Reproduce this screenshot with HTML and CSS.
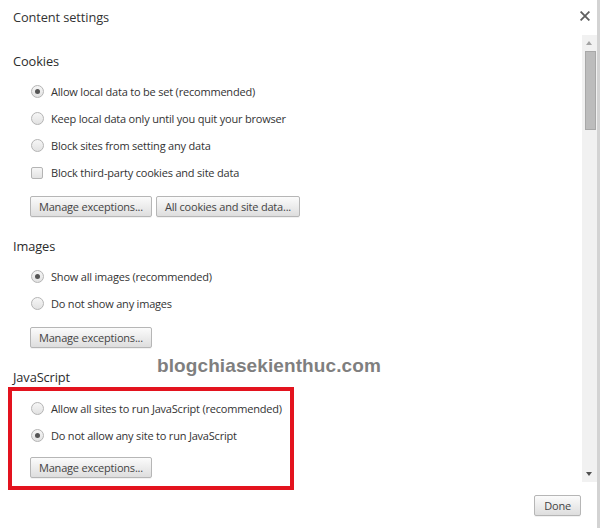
FILE: index.html
```html
<!DOCTYPE html>
<html>
<head>
<meta charset="utf-8">
<link rel="stylesheet" href="styles.css">
</head>
<body>
<div class="dialog">
  <div class="header">
    <div class="title">Content settings</div>
    <div class="close"><svg width="10" height="10" viewBox="0 0 10 10"><path d="M1.2 1.2L8.8 8.8M8.8 1.2L1.2 8.8" stroke="#5f5f5f" stroke-width="1.8" stroke-linecap="square"/></svg></div>
  </div>
  <div class="main">
    <div class="content">
      <div class="section">
        <div class="heading">Cookies</div>
        <div class="row"><span class="radio checked"></span><span>Allow local data to be set (recommended)</span></div>
        <div class="row"><span class="radio"></span><span>Keep local data only until you quit your browser</span></div>
        <div class="row"><span class="radio"></span><span>Block sites from setting any data</span></div>
        <div class="row"><span class="check"></span><span>Block third-party cookies and site data</span></div>
        <div class="buttons"><span class="btn">Manage exceptions...</span><span class="btn">All cookies and site data...</span></div>
      </div>
      <div class="section">
        <div class="heading">Images</div>
        <div class="row"><span class="radio checked"></span><span>Show all images (recommended)</span></div>
        <div class="row"><span class="radio"></span><span>Do not show any images</span></div>
        <div class="buttons"><span class="btn">Manage exceptions...</span></div>
      </div>
      <div class="section">
        <div class="heading flush">JavaScript</div>
        <div class="highlight">
          <div class="row"><span class="radio"></span><span>Allow all sites to run JavaScript (recommended)</span></div>
          <div class="row"><span class="radio checked"></span><span>Do not allow any site to run JavaScript</span></div>
          <div class="buttons"><span class="btn">Manage exceptions...</span></div>
        </div>
      </div>
    </div>
    <div class="scrollbar">
      <div class="arrow up"></div>
      <div class="thumb"></div>
      <div class="spacer"></div>
      <div class="arrow down"></div>
    </div>
  </div>
  <div class="footer"><span class="btn done">Done</span></div>
  <div class="watermark">blogchiasekienthuc.com</div>
</div>
</body>
</html>
```
FILE: styles.css
```css
html, body {
  margin: 0;
  padding: 0;
  background: #fff;
}
.dialog {
  position: relative;
  width: 597px;
  height: 528px;
  border-right: 3px solid #d3d3d3;
  display: flex;
  flex-direction: column;
  font-family: "Open Sans", "Noto Sans", sans-serif;
  color: #303030;
  overflow: hidden;
}
.header {
  height: 35px;
  display: flex;
  justify-content: space-between;
  align-items: flex-start;
}
.title {
  font-size: 12.8px;
  letter-spacing: -0.1px;
  margin: 7px 0 0 13px;
  color: #333;
  line-height: 20px;
}
.close {
  margin: 4px 7px 0 0;
}
.main {
  height: 447px;
  display: flex;
}
.content {
  flex: 1;
  padding: 16px 0 0 13px;
}
.section {
  margin-bottom: 19px;
}
.heading {
  font-size: 12.8px;
  letter-spacing: -0.1px;
  line-height: 20px;
  height: 20px;
  color: #2b2b2b;
  margin-bottom: 7px;
}
.heading.flush {
  margin-bottom: 0;
}
.row {
  height: 27px;
  display: flex;
  align-items: center;
  padding-left: 18px;
  font-size: 11px;
  letter-spacing: -0.2px;
  color: #333;
  white-space: nowrap;
}
.radio {
  width: 11px;
  height: 11px;
  border: 1px solid #b4b4b4;
  border-radius: 50%;
  background: linear-gradient(#f6f6f6, #e2e2e2);
  margin-right: 7px;
  position: relative;
  box-sizing: content-box;
  flex: none;
}
.radio.checked::after {
  content: "";
  position: absolute;
  left: 3px;
  top: 3px;
  width: 5px;
  height: 5px;
  border-radius: 50%;
  background: #555;
}
.check {
  width: 10px;
  height: 10px;
  border: 1px solid #b4b4b4;
  border-radius: 2px;
  background: linear-gradient(#f6f6f6, #e2e2e2);
  margin-right: 8px;
  flex: none;
}
.buttons {
  margin-top: 10px;
  padding-left: 17px;
  display: flex;
  gap: 4px;
}
.btn {
  display: inline-flex;
  align-items: center;
  justify-content: center;
  height: 19px;
  padding: 0 8px;
  border: 1px solid #b6b6b6;
  border-radius: 2px;
  background: linear-gradient(#fbfbfb, #dedede);
  font-size: 11px;
  letter-spacing: -0.2px;
  color: #444;
  white-space: nowrap;
  box-shadow: 0 1px 0 rgba(0,0,0,0.05);
}
.highlight {
  margin-left: -5px;
  width: 278px;
  border: 4px solid #e3131e;
  padding: 4px 0 8px 0;
}
.highlight .row { padding-left: 19px; }
.highlight .buttons { padding-left: 18px; margin-top: 8px; }
.scrollbar {
  width: 15px;
  background: #f1f1f1;
  display: flex;
  flex-direction: column;
  align-items: center;
}
.arrow {
  height: 16px;
  width: 15px;
  position: relative;
}
.arrow::after {
  content: "";
  position: absolute;
  left: 4px;
  width: 0;
  height: 0;
  border-left: 3.5px solid transparent;
  border-right: 3.5px solid transparent;
}
.arrow.up::after { top: 6px; border-bottom: 4px solid #a3a3a3; }
.arrow.down::after { top: 6px; border-top: 4px solid #505050; }
.thumb {
  width: 11px;
  height: 79px;
  background: #bcbcbc;
  border: 1px solid #a8a8a8;
  box-sizing: border-box;
  margin-left: 1px;
}
.spacer { flex: 1; }
.footer {
  flex: 1;
  display: flex;
  justify-content: flex-end;
  align-items: flex-start;
  padding: 13px 16px 0 0;
}
.done {
  height: 19px;
  padding: 0 9px;
}
.watermark {
  position: absolute;
  left: 157px;
  top: 355px;
  font-family: "Liberation Sans", Arial, sans-serif;
  font-weight: bold;
  font-size: 19px;
  color: #7f7f7f;
  letter-spacing: 0.1px;
}
```
